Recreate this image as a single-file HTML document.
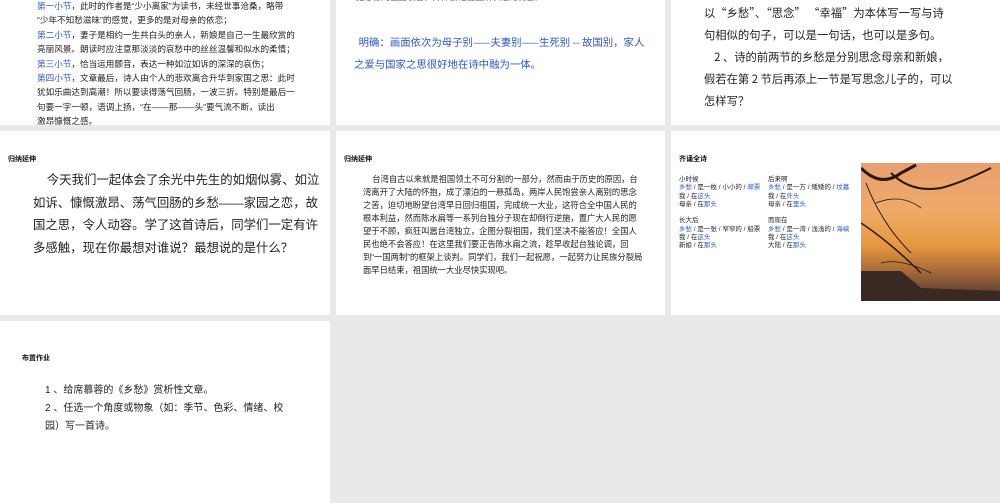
<!DOCTYPE html>
<html><head><meta charset="utf-8"><style>
body{margin:0;width:1000px;height:503px;background:#e9e9e9;position:relative;overflow:hidden;font-family:"Liberation Sans","Noto Sans CJK SC",sans-serif;color:#222}
.p{position:absolute;background:#fff;overflow:hidden}
.a{position:absolute}
.n{white-space:nowrap}
.c{font-family:"Noto Sans CJK SC",sans-serif}
.b{color:#2f57c4}
.t{font-size:7px;font-weight:bold;color:#111}
</style></head><body>
<div class="p" style="left:0;top:0;width:330px;height:125px">
<div class="a n" style="left:37px;top:-1px;font-size:8.6px;line-height:14.4px">
<span class="b">第一小节</span>，此时的作者是“少小离家”为读书，未经世事沧桑，略带<br>“少年不知愁滋味”的感觉，更多的是对母亲的依恋；<br>
<span class="b">第二小节</span>，妻子是相约一生共白头的亲人，新娘是自己一生最欣赏的<br>亮丽风景。朗读时应注意那淡淡的哀愁中的丝丝温馨和似水的柔情；<br>
<span class="b">第三小节</span>，恰当运用颤音，表达一种如泣如诉的深深的哀伤；<br>
<span class="b">第四小节</span>，文章最后，诗人由个人的悲欢离合升华到家国之思：此时<br>犹如乐曲达到高潮！所以要读得荡气回肠，一波三折。特别是最后一<br>句要一字一顿，语调上扬，“在——那——头”要气流不断，读出<br>激昂慷慨之感。</div>
</div>
<div class="p" style="left:336px;top:0;width:329px;height:125px">
<div class="a" style="left:20px;top:-9px;font-size:8.5px;color:#555">把想像的画面联合，并体会他画面所表达的情感。</div>
<div class="a b n c" style="left:18px;top:31px;font-size:10.4px;line-height:22px">&nbsp;&nbsp;明确：画面依次为母子别——夫妻别——生死别 -- 故国别，家人<br>之爱与国家之思很好地在诗中融为一体。</div>
</div>
<div class="p" style="left:671px;top:0;width:329px;height:125px">
<div class="a n c" style="left:33px;top:2px;font-size:11.3px;line-height:22px">以“乡愁”、“思念” “幸福”为本体写一写与诗<br>句相似的句子，可以是一句话，也可以是多句。<br>&nbsp;&nbsp;&nbsp;&nbsp;2 、诗的前两节的乡愁是分别思念母亲和新娘，<br>假若在第 2 节后再添上一节是写思念儿子的，可以<br>怎样写？</div>
</div>

<div class="p" style="left:0;top:131px;width:330px;height:184px">
<div class="a t" style="left:8px;top:23px">归纳延伸</div>
<div class="a n" style="left:33px;top:38px;font-size:12.4px;line-height:22.5px">&nbsp;&nbsp;&nbsp;&nbsp;今天我们一起体会了余光中先生的如烟似雾、如泣<br>如诉、慷慨激昂、荡气回肠的乡愁——家园之恋，故<br>国之思，令人动容。学了这首诗后，同学们一定有许<br>多感触，现在你最想对谁说？最想说的是什么？</div>
</div>
<div class="p" style="left:336px;top:131px;width:329px;height:184px">
<div class="a t" style="left:8px;top:23px">归纳延伸</div>
<div class="a" style="left:27px;top:42px;width:280px;font-size:8.3px;line-height:13px">&nbsp;&nbsp;&nbsp;&nbsp;台湾自古以来就是祖国领土不可分割的一部分，然而由于历史的原因，台湾离开了大陆的怀抱，成了漂泊的一悬孤岛，两岸人民饱尝亲人离别的思念之苦，迫切地盼望台湾早日回归祖国，完成统一大业，这符合全中国人民的根本利益，然而陈水扁等一系列台独分子现在却倒行逆施，置广大人民的愿望于不顾，疯狂叫嚣台湾独立，企图分裂祖国，我们坚决不能答应！全国人民也绝不会答应！在这里我们要正告陈水扁之流，趁早收起台独论调，回到“一国两制”的框架上谈判。同学们，我们一起祝愿，一起努力让民族分裂局面早日结束，祖国统一大业尽快实现吧。</div>
</div>
<div class="p" style="left:671px;top:131px;width:329px;height:184px">
<div class="a t" style="left:8px;top:23px">齐诵全诗</div>
<div class="a" style="left:8px;top:45px;font-size:6.5px;line-height:8.3px">小时候<br><span class="b">乡愁</span> / 是一枚 / 小小的 / <span class="b">邮票</span><br>我 / 在<span class="b">这头</span><br>母亲 / 在<span class="b">那头</span><br><br>长大后<br><span class="b">乡愁</span> / 是一张 / 窄窄的 / 船票<br>我 / 在<span class="b">这头</span><br>新娘 / 在<span class="b">那头</span></div>
<div class="a" style="left:97px;top:45px;font-size:6.5px;line-height:8.3px">后来啊<br><span class="b">乡愁</span> / 是一方 / 矮矮的 / <span class="b">坟墓</span><br>我 / 在<span class="b">外头</span><br>母亲 / 在<span class="b">里头</span><br><br>而现在<br><span class="b">乡愁</span> / 是一湾 / 浅浅的 / <span class="b">海峡</span><br>我 / 在<span class="b">这头</span><br>大陆 / 在<span class="b">那头</span></div>
<div class="a" style="left:190px;top:32px;width:139px;height:138px;background:linear-gradient(180deg,#e8a070 0%,#eeaa68 35%,#e6983e 60%,#a86a38 78%,#4a3430 100%)">
<svg width="139" height="138" style="position:absolute;left:0;top:0"><g stroke="#2a1810" fill="none"><path d="M0 5 Q20 25 40 10 L55 2" stroke-width="3"/><path d="M30 10 Q50 30 80 25 Q100 20 130 5" stroke-width="2"/><path d="M0 60 Q30 80 60 110" stroke-width="1.5"/><path d="M5 20 Q20 60 50 90" stroke-width="1"/><path d="M15 40 Q40 30 60 45" stroke-width="0.8"/><path d="M20 100 Q40 95 70 110" stroke-width="0.8"/></g><path d="M0 108 L40 108 L60 125 L139 128 L139 138 L0 138Z" fill="#3a2822"/></svg></div>
</div>

<div class="p" style="left:0;top:321px;width:330px;height:182px">
<div class="a t" style="left:22px;top:32px">布置作业</div>
<div class="a" style="left:45px;top:61px;width:250px;font-size:10px;line-height:18px">1 、给席慕蓉的《乡愁》赏析性文章。<br>2 、任选一个角度或物象（如：季节、色彩、情绪、校园）写一首诗。</div>
</div>
</body></html>
